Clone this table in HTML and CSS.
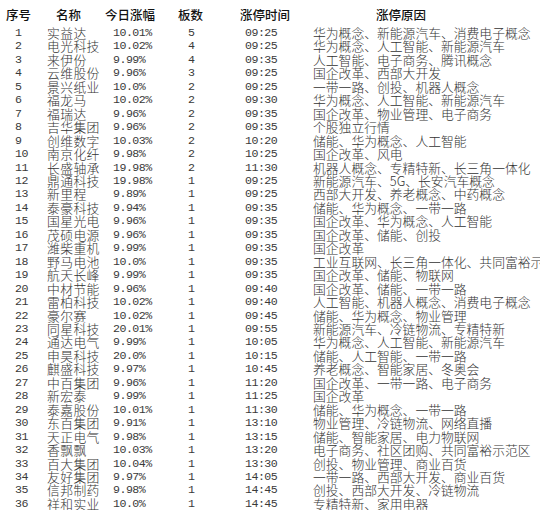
FILE: index.html
```html
<!DOCTYPE html>
<html lang="zh-CN">
<head>
<meta charset="utf-8">
<title>涨停</title>
<link rel="stylesheet" href="styles.css">
</head>
<body>
<div class="sheet">
  <div class="row head">
    <div>序号</div><div>名称</div><div>今日涨幅</div><div>板数</div><div>涨停时间</div><div>涨停原因</div>
  </div>
  <div class="row"><div class="n">1</div><div class="name">实益达</div><div class="n pct">10.01%</div><div class="n cnt">5</div><div class="n tm">09:25</div><div class="why">华为概念、新能源汽车、消费电子概念</div></div>
  <div class="row"><div class="n">2</div><div class="name">电光科技</div><div class="n pct">10.02%</div><div class="n cnt">4</div><div class="n tm">09:25</div><div class="why">华为概念、人工智能、新能源汽车</div></div>
  <div class="row"><div class="n">3</div><div class="name">来伊份</div><div class="n pct">9.99%</div><div class="n cnt">4</div><div class="n tm">09:35</div><div class="why">人工智能、电子商务、腾讯概念</div></div>
  <div class="row"><div class="n">4</div><div class="name">云维股份</div><div class="n pct">9.96%</div><div class="n cnt">3</div><div class="n tm">09:25</div><div class="why">国企改革、西部大开发</div></div>
  <div class="row"><div class="n">5</div><div class="name">景兴纸业</div><div class="n pct">10.0%</div><div class="n cnt">2</div><div class="n tm">09:25</div><div class="why">一带一路、创投、机器人概念</div></div>
  <div class="row"><div class="n">6</div><div class="name">福龙马</div><div class="n pct">10.02%</div><div class="n cnt">2</div><div class="n tm">09:30</div><div class="why">华为概念、人工智能、新能源汽车</div></div>
  <div class="row"><div class="n">7</div><div class="name">福瑞达</div><div class="n pct">9.96%</div><div class="n cnt">2</div><div class="n tm">09:35</div><div class="why">国企改革、物业管理、电子商务</div></div>
  <div class="row"><div class="n">8</div><div class="name">吉华集团</div><div class="n pct">9.96%</div><div class="n cnt">2</div><div class="n tm">09:35</div><div class="why">个股独立行情</div></div>
  <div class="row"><div class="n">9</div><div class="name">创维数字</div><div class="n pct">10.03%</div><div class="n cnt">2</div><div class="n tm">10:20</div><div class="why">储能、华为概念、人工智能</div></div>
  <div class="row"><div class="n">10</div><div class="name">南京化纤</div><div class="n pct">9.98%</div><div class="n cnt">2</div><div class="n tm">10:25</div><div class="why">国企改革、风电</div></div>
  <div class="row"><div class="n">11</div><div class="name">长盛轴承</div><div class="n pct">19.98%</div><div class="n cnt">2</div><div class="n tm">11:30</div><div class="why">机器人概念、专精特新、长三角一体化</div></div>
  <div class="row"><div class="n">12</div><div class="name">鼎通科技</div><div class="n pct">19.98%</div><div class="n cnt">1</div><div class="n tm">09:25</div><div class="why">新能源汽车、5G、长安汽车概念</div></div>
  <div class="row"><div class="n">13</div><div class="name">新里程</div><div class="n pct">9.89%</div><div class="n cnt">1</div><div class="n tm">09:25</div><div class="why">西部大开发、养老概念、中药概念</div></div>
  <div class="row"><div class="n">14</div><div class="name">泰豪科技</div><div class="n pct">9.94%</div><div class="n cnt">1</div><div class="n tm">09:35</div><div class="why">储能、华为概念、一带一路</div></div>
  <div class="row"><div class="n">15</div><div class="name">国星光电</div><div class="n pct">9.96%</div><div class="n cnt">1</div><div class="n tm">09:35</div><div class="why">国企改革、华为概念、人工智能</div></div>
  <div class="row"><div class="n">16</div><div class="name">茂硕电源</div><div class="n pct">9.96%</div><div class="n cnt">1</div><div class="n tm">09:35</div><div class="why">国企改革、储能、创投</div></div>
  <div class="row"><div class="n">17</div><div class="name">潍柴重机</div><div class="n pct">9.99%</div><div class="n cnt">1</div><div class="n tm">09:35</div><div class="why">国企改革</div></div>
  <div class="row"><div class="n">18</div><div class="name">野马电池</div><div class="n pct">10.0%</div><div class="n cnt">1</div><div class="n tm">09:35</div><div class="why">工业互联网、长三角一体化、共同富裕示范区</div></div>
  <div class="row"><div class="n">19</div><div class="name">航天长峰</div><div class="n pct">9.99%</div><div class="n cnt">1</div><div class="n tm">09:35</div><div class="why">国企改革、储能、物联网</div></div>
  <div class="row"><div class="n">20</div><div class="name">中材节能</div><div class="n pct">9.96%</div><div class="n cnt">1</div><div class="n tm">09:40</div><div class="why">国企改革、储能、一带一路</div></div>
  <div class="row"><div class="n">21</div><div class="name">雷柏科技</div><div class="n pct">10.02%</div><div class="n cnt">1</div><div class="n tm">09:40</div><div class="why">人工智能、机器人概念、消费电子概念</div></div>
  <div class="row"><div class="n">22</div><div class="name">豪尔赛</div><div class="n pct">10.02%</div><div class="n cnt">1</div><div class="n tm">09:45</div><div class="why">储能、华为概念、物业管理</div></div>
  <div class="row"><div class="n">23</div><div class="name">同星科技</div><div class="n pct">20.01%</div><div class="n cnt">1</div><div class="n tm">09:55</div><div class="why">新能源汽车、冷链物流、专精特新</div></div>
  <div class="row"><div class="n">24</div><div class="name">通达电气</div><div class="n pct">9.99%</div><div class="n cnt">1</div><div class="n tm">10:05</div><div class="why">华为概念、人工智能、新能源汽车</div></div>
  <div class="row"><div class="n">25</div><div class="name">申昊科技</div><div class="n pct">20.0%</div><div class="n cnt">1</div><div class="n tm">10:15</div><div class="why">储能、人工智能、一带一路</div></div>
  <div class="row"><div class="n">26</div><div class="name">麒盛科技</div><div class="n pct">9.97%</div><div class="n cnt">1</div><div class="n tm">10:45</div><div class="why">养老概念、智能家居、冬奥会</div></div>
  <div class="row"><div class="n">27</div><div class="name">中百集团</div><div class="n pct">9.96%</div><div class="n cnt">1</div><div class="n tm">11:20</div><div class="why">国企改革、一带一路、电子商务</div></div>
  <div class="row"><div class="n">28</div><div class="name">新宏泰</div><div class="n pct">9.99%</div><div class="n cnt">1</div><div class="n tm">11:25</div><div class="why">国企改革</div></div>
  <div class="row"><div class="n">29</div><div class="name">泰嘉股份</div><div class="n pct">10.01%</div><div class="n cnt">1</div><div class="n tm">11:30</div><div class="why">储能、华为概念、一带一路</div></div>
  <div class="row"><div class="n">30</div><div class="name">东百集团</div><div class="n pct">9.91%</div><div class="n cnt">1</div><div class="n tm">13:10</div><div class="why">物业管理、冷链物流、网络直播</div></div>
  <div class="row"><div class="n">31</div><div class="name">天正电气</div><div class="n pct">9.98%</div><div class="n cnt">1</div><div class="n tm">13:15</div><div class="why">储能、智能家居、电力物联网</div></div>
  <div class="row"><div class="n">32</div><div class="name">香飘飘</div><div class="n pct">10.03%</div><div class="n cnt">1</div><div class="n tm">13:20</div><div class="why">电子商务、社区团购、共同富裕示范区</div></div>
  <div class="row"><div class="n">33</div><div class="name">百大集团</div><div class="n pct">10.04%</div><div class="n cnt">1</div><div class="n tm">13:30</div><div class="why">创投、物业管理、商业百货</div></div>
  <div class="row"><div class="n">34</div><div class="name">友好集团</div><div class="n pct">9.97%</div><div class="n cnt">1</div><div class="n tm">14:05</div><div class="why">一带一路、西部大开发、商业百货</div></div>
  <div class="row"><div class="n">35</div><div class="name">信邦制药</div><div class="n pct">9.98%</div><div class="n cnt">1</div><div class="n tm">14:45</div><div class="why">创投、西部大开发、冷链物流</div></div>
  <div class="row"><div class="n">36</div><div class="name">祥和实业</div><div class="n pct">10.0%</div><div class="n cnt">1</div><div class="n tm">14:45</div><div class="why">专精特新、家用电器</div></div>
</div>
</body>
</html>
```

FILE: styles.css
```css
html, body {
  margin: 0;
  padding: 0;
  background: #fff;
  overflow: hidden;
}
body {
  font-family: "Noto Sans CJK SC", "Noto Sans", sans-serif;
  font-weight: 300;
  color: #333;
  font-size: 12.8px;
}
.sheet {
  width: 540px;
}
.row {
  display: grid;
  grid-template-columns: 37px 63px 60px 61px 88px 184px;
  height: 13.46px;
  line-height: 13.46px;
  white-space: nowrap;
}
.row > div {
  overflow: visible;
}
.head {
  height: 26px;
  padding-top: 8px;
  box-sizing: border-box;
  line-height: 13px;
  font-weight: 500;
  color: #111;
  font-size: 12.5px;
}
.head > div {
  text-align: center;
}
.n {
  font-family: "Liberation Mono", "DejaVu Sans Mono", monospace;
  font-weight: 400;
  font-size: 11.6px;
  letter-spacing: -0.5px;
  color: #3a3a3a;
}
.row > .n:first-child {
  padding-left: 15px;
}
.name {
  padding-left: 10px;
  letter-spacing: 0.4px;
}
.row > .pct {
  padding-left: 13px;
}
.row > .cnt {
  padding-left: 28px;
}
.row > .tm {
  padding-left: 24px;
}
.why {
  padding-left: 4px;
  letter-spacing: 0;
}
```
